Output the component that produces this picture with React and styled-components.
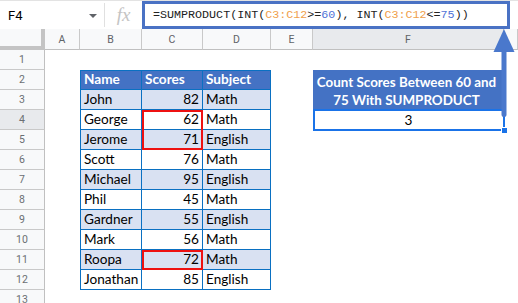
import React from 'react';
import styled, { createGlobalStyle, css } from 'styled-components';

const Global = createGlobalStyle`
  html, body { margin: 0; padding: 0; background: #fff; }
  body { overflow: hidden; }
  * { box-sizing: border-box; }
`;

const Page = styled.div`
  position: relative;
  width: 518px;
  height: 303px;
  overflow: hidden;
  background: #fff;
  font-family: Roboto, "Liberation Sans", sans-serif;
`;

const FormulaBar = styled.div`
  display: flex;
  align-items: center;
  height: 29px;
  border-top: 1px solid #e3e3e3;
`;

const NameBox = styled.div`
  width: 104px;
  height: 100%;
  display: flex;
  align-items: center;
  justify-content: space-between;
  padding: 0 7px 0 8px;
  font-size: 13px;
  color: #000;
`;

const Caret = styled.span`
  width: 0;
  height: 0;
  border-left: 4px solid transparent;
  border-right: 4px solid transparent;
  border-top: 4px solid #606368;
  margin-top: 2px;
`;

const Divider = styled.div`
  width: 1px;
  height: 24px;
  background: #e0e0e0;
`;

const Fx = styled.div`
  width: 37px;
  text-align: center;
  font-family: "Liberation Serif", serif;
  font-style: italic;
  font-size: 19px;
  color: #c4c4c4;
  line-height: 28px;
`;

const FormulaBox = styled.div`
  flex: 1;
  align-self: stretch;
  margin-right: 8px;
  border: 3px solid #4a72c4;
  padding-left: 8px;
  display: flex;
  align-items: center;
  font-family: "Liberation Mono", "DejaVu Sans Mono", monospace;
  font-size: 11.7px;
  color: #222;
  white-space: pre;
`;

const Ref = styled.span`
  color: #f0a04b;
`;
const Num = styled.span`
  color: #4f72d6;
`;

const Sheet = styled.div`
  display: grid;
  grid-template-columns: 45px 35px 62px 61px 68px 42px 191px 1fr;
  grid-template-rows: 21px repeat(13, 20px);
`;

const Corner = styled.div`
  background: #f8f9fa;
  border-right: 4px solid #c4c4c4;
  border-bottom: 4px solid #c4c4c4;
`;

const ColHead = styled.div`
  background: ${p => (p.$active ? '#e8eaed' : '#f8f9fa')};
  border-right: 1px solid #c9c9c9;
  border-bottom: 1px solid #c0c0c0;
  display: flex;
  align-items: center;
  justify-content: center;
  font-size: 10.5px;
  color: #5f6368;
`;

const RowHead = styled.div`
  background: ${p => (p.$active ? '#e8eaed' : '#f8f9fa')};
  border-right: 1px solid #c0c0c0;
  border-bottom: 1px solid #c9c9c9;
  display: flex;
  align-items: center;
  justify-content: center;
  font-size: 10.5px;
  color: #6b6f73;
`;

const Blank = styled.div``;

const TCell = styled.div`
  position: relative;
  display: flex;
  align-items: flex-end;
  justify-content: ${p => (p.$right ? 'flex-end' : 'flex-start')};
  padding: 0 3px 1px 3px;
  font-family: Lato, "Open Sans", sans-serif;
  font-size: 13.6px;
  line-height: 18px;
  white-space: nowrap;
  color: #000;
  background: ${p => (p.$head ? '#4472c4' : p.$band ? '#d9e1f2' : '#fff')};
  border-right: 1px solid #0a70c2;
  border-bottom: 1px solid #0a70c2;
  ${p => p.$first && css`border-left: 1px solid #0a70c2;`}
  ${p => p.$head && css`
    border-top: 1px solid #0a70c2;
    color: #fff;
    font-weight: 700;
  `}
  ${p => p.$hl && css`
    &::after {
      content: '';
      position: absolute;
      left: 0;
      right: -1px;
      top: ${p.$hl === 'bottom' ? '-1px' : '0'};
      bottom: ${p.$hl === 'top' ? '0' : '-1px'};
      border: 2px solid #ee1111;
      ${p.$hl === 'top' ? 'border-bottom: none;' : ''}
      ${p.$hl === 'bottom' ? 'border-top: none;' : ''}
    }
  `}
`;

const ResultHead = styled.div`
  grid-row: span 2;
  background: #4472c4;
  color: #fff;
  font-family: Lato, "Open Sans", sans-serif;
  font-weight: 700;
  font-size: 13.4px;
  line-height: 18px;
  white-space: nowrap;
  text-align: center;
  display: flex;
  align-items: center;
  justify-content: center;
  padding: 1px 4px 0 0;
`;

const ResultCell = styled.div`
  position: relative;
  display: flex;
  align-items: flex-end;
  justify-content: center;
  padding-bottom: 1px;
  font-family: Lato, "Open Sans", sans-serif;
  font-size: 13.6px;
  line-height: 18px;
  color: #000;
  &::after {
    content: '';
    position: absolute;
    top: -1px;
    left: 0;
    right: -1px;
    bottom: -1px;
    border: 2px solid #1a73e8;
  }
`;

const Handle = styled.span`
  position: absolute;
  right: -4px;
  bottom: -4px;
  width: 7px;
  height: 7px;
  background: #1a73e8;
  border: 1px solid #fff;
  z-index: 2;
`;

const Arrow = styled.svg`
  position: absolute;
  left: 490px;
  top: 27px;
  z-index: 3;
`;

const data = [
  ['John', 82, 'Math'],
  ['George', 62, 'Math', 'top'],
  ['Jerome', 71, 'English', 'bottom'],
  ['Scott', 76, 'Math'],
  ['Michael', 95, 'English'],
  ['Phil', 45, 'Math'],
  ['Gardner', 55, 'English'],
  ['Mark', 56, 'Math'],
  ['Roopa', 72, 'Math', 'all'],
  ['Jonathan', 85, 'English'],
];

const cols = ['A', 'B', 'C', 'D', 'E', 'F', ''];

export default function App() {
  const cells = [];
  cells.push(<Corner key="corner" />);
  cols.forEach(c => cells.push(<ColHead key={'h' + c} $active={c === 'F'}>{c}</ColHead>));

  for (let r = 1; r <= 13; r++) {
    cells.push(<RowHead key={'r' + r} $active={r === 4}>{r}</RowHead>);
    cells.push(<Blank key={'a' + r} />);
    if (r === 2) {
      cells.push(<TCell key="b2" $head $first>Name</TCell>);
      cells.push(<TCell key="c2" $head>Scores</TCell>);
      cells.push(<TCell key="d2" $head>Subject</TCell>);
    } else if (r >= 3 && r <= 12) {
      const [name, score, subj, hl] = data[r - 3];
      const band = r % 2 === 1;
      cells.push(<TCell key={'b' + r} $first $band={band}>{name}</TCell>);
      cells.push(<TCell key={'c' + r} $band={band} $right $hl={hl}>{score}</TCell>);
      cells.push(<TCell key={'d' + r} $band={band}>{subj}</TCell>);
    } else {
      cells.push(<Blank key={'b' + r} />, <Blank key={'c' + r} />, <Blank key={'d' + r} />);
    }
    cells.push(<Blank key={'e' + r} />);
    if (r === 2) {
      cells.push(
        <ResultHead key="f2">
          Count Scores Between 60 and
          <br />
          75 With SUMPRODUCT
        </ResultHead>
      );
    } else if (r === 3) {
      // covered by merged header
    } else if (r === 4) {
      cells.push(
        <ResultCell key="f4">
          3
          <Handle />
        </ResultCell>
      );
    } else {
      cells.push(<Blank key={'f' + r} />);
    }
    cells.push(<Blank key={'g' + r} />);
  }

  return (
    <Page>
      <Global />
      <FormulaBar>
        <NameBox>
          F4
          <Caret />
        </NameBox>
        <Divider />
        <Fx>fx</Fx>
        <FormulaBox>
          =SUMPRODUCT(INT(<Ref>C3:C12</Ref>&gt;=<Num>60</Num>), INT(<Ref>C3:C12</Ref>&lt;=<Num>75</Num>))
        </FormulaBox>
      </FormulaBar>
      <Sheet>{cells}</Sheet>
      <Arrow width="28" height="95" viewBox="0 0 28 95">
        <polygon points="14,2 3.5,25 24.5,25" fill="#4a78cc" />
        <rect x="11.5" y="22" width="5" height="68" rx="2.5" fill="#4a78cc" />
      </Arrow>
    </Page>
  );
}
